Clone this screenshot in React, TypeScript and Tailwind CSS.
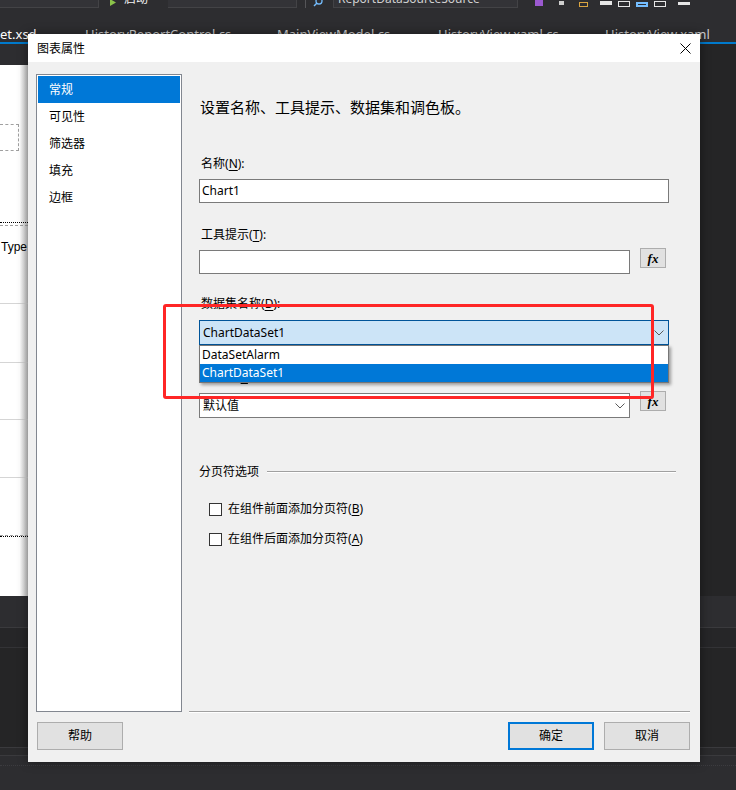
import React from "react";

function Chevron() {
  return (
    <svg width="10" height="6" viewBox="0 0 10 6" className="block">
      <path d="M0.5 0.5 L5 5 L9.5 0.5" fill="none" stroke="#5a5a5a" strokeWidth="1" />
    </svg>
  );
}

function FxButton() {
  return (
    <div className="w-[26px] h-[20px] bg-[#e1e1e1] border border-[#adadad] flex items-center justify-center">
      <span className="font-['Liberation_Serif',serif] italic font-bold text-[13px] leading-[13px] text-black">fx</span>
    </div>
  );
}

function Label({ text, k }: { text: string; k: string }) {
  return (
    <div className="text-[12px] leading-[16px] text-black pl-[2px]">
      {text}(<span className="underline underline-offset-2">{k}</span>):
    </div>
  );
}

function Checkbox({ text, k }: { text: string; k: string }) {
  return (
    <div className="flex items-center h-[16px] pl-[10px]">
      <div className="w-[13px] h-[13px] border border-[#333333] bg-white" />
      <div className="ml-[6px] text-[12px] leading-[16px] text-black">
        {text}(<span className="underline underline-offset-2">{k}</span>)
      </div>
    </div>
  );
}

function Btn({ text, primary }: { text: string; primary?: boolean }) {
  return (
    <div
      className={
        "w-[86px] h-[28px] flex items-center justify-center text-[12px] text-black bg-[#e1e1e1] " +
        (primary ? "border-2 border-[#0078d7]" : "border border-[#adadad]")
      }
    >
      {text}
    </div>
  );
}

export default function App() {
  return (
    <div className="relative w-[736px] h-[790px] overflow-hidden bg-[#2d2d30] font-['Noto_Sans','Noto_Sans_CJK_SC',sans-serif]">
      {/* IDE background */}
      <div className="flex flex-col w-full h-full">
        {/* toolbar (mostly clipped) */}
        <div className="h-[8px] flex items-end overflow-hidden">
          <div className="w-[99px] h-[20px] shrink-0 border-r border-b border-[#434346] bg-[#333337]" />
          <div className="w-[11px] shrink-0" />
          <div className="h-[20px] w-[58px] shrink-0 flex items-end pb-[2px]">
            <svg width="6" height="7" viewBox="0 0 6 7"><path d="M0 0 L6 3.5 L0 7z" fill="#8bc34a" /></svg>
            <span className="ml-[8px] text-[12px] leading-[14px] text-[#f1f1f1]">启动</span>
          </div>
          <div className="w-[129px] h-[20px] shrink-0 border-r border-b border-[#434346] bg-[#333337]" />
          <div className="w-[8px] shrink-0" />
          <div className="w-[1px] h-[20px] shrink-0 bg-[#555558]" />
          <div className="w-[7px] shrink-0" />
          <div className="w-[20px] h-[20px] shrink-0 flex items-end pb-[1px]">
            <svg width="10" height="8" viewBox="0 0 10 8"><circle cx="6" cy="2" r="3" fill="none" stroke="#75beff" strokeWidth="1.3" /><path d="M4 4 L1 7" stroke="#75beff" strokeWidth="1.5" /></svg>
          </div>
          <div className="w-[185px] h-[20px] shrink-0 border border-[#434346] bg-[#333337] px-[4px] text-[12px] leading-[19px] text-[#d0d0d0] overflow-hidden whitespace-nowrap">
            ReportDataSourceSource
          </div>
          <div className="w-[17px] shrink-0" />
          <div className="w-[8px] h-[6px] shrink-0 bg-[#9b59d0] mb-[2px]" />
          <div className="w-[16px] shrink-0" />
          <div className="w-[5px] h-[4px] shrink-0 bg-[#cfcfcf] mb-[3px]" />
          <div className="w-[15px] shrink-0" />
          <div className="w-[9px] h-[5px] shrink-0 border border-[#d9a441] mb-[1px]" />
          <div className="w-[12px] shrink-0" />
          <div className="w-[12px] h-[4px] shrink-0 bg-[#e6e6e6] mb-[3px]" />
          <div className="w-[6px] shrink-0" />
          <div className="w-[12px] h-[6px] shrink-0 border border-[#e6e6e6] mb-[1px]" />
          <div className="w-[6px] shrink-0" />
          <div className="w-[12px] h-[5px] shrink-0 border-2 border-[#75beff] mb-[1px]" />
          <div className="w-[6px] shrink-0" />
          <div className="w-[12px] h-[6px] shrink-0 border border-[#e6e6e6] mb-[1px]" />
          <div className="w-[12px] shrink-0" />
          <div className="w-[12px] h-[3px] shrink-0 bg-[#e6e6e6] mb-[3px]" />
        </div>
        {/* tab row */}
        <div className="h-[34px] flex pt-[17px] text-[13px] leading-[18px] whitespace-nowrap">
          <div className="w-[85px] shrink-0 text-[#ffffff]">et.xsd</div>
          <div className="w-[192px] shrink-0 text-[#d0d0d0]">HistoryReportControl.cs</div>
          <div className="w-[161px] shrink-0 text-[#d0d0d0]">MainViewModel.cs</div>
          <div className="w-[167px] shrink-0 text-[#d0d0d0]">HistoryView.xaml.cs</div>
          <div className="flex-1 text-[#d0d0d0]">HistoryView.xaml</div>
        </div>
        <div className="h-[2px] bg-[#007acc]" />
        {/* editor area */}
        <div className="h-[552px] flex">
          <div className="w-[28px] flex flex-col">
            <div className="h-[21px] bg-[#2d2d30]" />
            <div className="flex-1 bg-gradient-to-r from-white from-70% to-[#c8c8c8] flex flex-col overflow-hidden">
              <div className="h-[59px] shrink-0" />
              <div className="h-[27px] w-[19px] shrink-0 border border-dashed border-[#a0a0a0] border-l-0" />
              <div className="h-[71px] shrink-0" />
              <div className="h-[1px] shrink-0 border-t border-dotted border-black" />
              <div className="h-[2px] shrink-0" />
              <div className="h-[1px] shrink-0 border-t border-dashed border-[#a0a0a0]" />
              <div className="h-[13px] shrink-0" />
              <div className="text-[12px] leading-[16px] text-black pl-[1px] font-['Liberation_Sans',sans-serif]">Type</div>
              <div className="h-[48px] shrink-0" />
              <div className="h-[1px] shrink-0 bg-[#d5d5d5]" />
              <div className="h-[58px] shrink-0" />
              <div className="h-[1px] shrink-0 bg-[#d5d5d5]" />
              <div className="h-[56px] shrink-0" />
              <div className="h-[1px] shrink-0 bg-[#d5d5d5]" />
              <div className="h-[57px] shrink-0" />
              <div className="h-[1px] shrink-0 bg-[#d5d5d5]" />
              <div className="h-[57px] shrink-0" />
              <div className="h-[1px] shrink-0 border-t border-dashed border-[#a0a0a0]" />
              <div className="h-[1px] shrink-0 border-t border-dotted border-black" />
            </div>
          </div>
          <div className="flex-1" />
          <div className="w-[36px] bg-[#252526]" />
        </div>
        {/* bottom area */}
        <div className="h-[32px] bg-[#2d2d30] border-b border-[#3a3a3d]" />
        <div className="h-[20px] bg-[#262628] border-b border-[#333336]" />
        <div className="h-[99px] bg-[#252526]" />
        <div className="h-[8px] bg-[#2a2a2c] border-t border-[#3a3a3d]" />
        <div className="h-[10px] bg-[#2d2d30] border-t border-[#3a3a3d]" />
        <div className="h-[2px] border-t border-dotted border-[#3c3c40]" />
        <div className="flex-1 bg-[#2d2d30]" />
      </div>

      {/* Dialog window */}
      <div className="absolute left-[28px] top-[34px] w-[672px] h-[728px] bg-[#f0f0f0] flex flex-col shadow-[0_0_10px_rgba(0,0,0,0.45)]">
        <div className="h-[28px] bg-white flex items-center justify-between pl-[9px] pr-[9px]">
          <span className="text-[12px] leading-[16px] text-black mt-[1px]">图表属性</span>
          <svg width="11" height="11" viewBox="0 0 11 11" className="block">
            <path d="M0.5 0.5 L10.5 10.5 M10.5 0.5 L0.5 10.5" stroke="#000" strokeWidth="1" />
          </svg>
        </div>
        <div className="flex-1 flex flex-col pl-[8px] pr-[10px] pt-[12px]">
          <div className="h-[638px] flex gap-[7px]">
            {/* nav list */}
            <div className="w-[146px] border border-[#828790] bg-white p-[1px] flex flex-col">
              <div className="h-[27px] bg-[#0078d7] text-white text-[12px] leading-[27px] pl-[11px]">常规</div>
              <div className="h-[27px] text-black text-[12px] leading-[27px] pl-[11px]">可见性</div>
              <div className="h-[27px] text-black text-[12px] leading-[27px] pl-[11px]">筛选器</div>
              <div className="h-[27px] text-black text-[12px] leading-[27px] pl-[11px]">填充</div>
              <div className="h-[27px] text-black text-[12px] leading-[27px] pl-[11px]">边框</div>
            </div>
            {/* content */}
            <div className="flex-1 flex flex-col border-b border-[#a0a0a0] shadow-[0_1px_0_#ffffff] pl-[10px] pr-[21px]">
              <div className="mt-[23px] text-[15px] leading-[20px] text-black pl-[1px]">设置名称、工具提示、数据集和调色板。</div>

              <div className="mt-[39px]"><Label text="名称" k="N" /></div>
              <div className="mt-[7px] h-[24px] border border-[#7a7a7a] bg-white pl-[2px] text-[12px] leading-[22px] text-black">Chart1</div>

              <div className="mt-[24px]"><Label text="工具提示" k="T" /></div>
              <div className="mt-[5px] flex items-start">
                <div className="mt-[2px] w-[431px] h-[24px] border border-[#7a7a7a] bg-white" />
                <div className="ml-[10px]"><FxButton /></div>
              </div>

              <div className="mt-[22px]"><Label text="数据集名称" k="D" /></div>
              <div className="mt-[8px] relative">
                <div className="h-[25px] border border-[#005499] bg-[#cce4f7] flex items-center justify-between pl-[3px] pr-[4px] text-[12px] text-black">
                  <span>ChartDataSet1</span>
                  <Chevron />
                </div>
                <div className="absolute left-0 top-full w-full z-10 bg-white border border-[#767676] shadow-[2px_2px_3px_rgba(0,0,0,0.35)] text-[12px]">
                  <div className="h-[18px] leading-[18px] pl-[2px] text-black">DataSetAlarm</div>
                  <div className="h-[18px] leading-[18px] pl-[2px] bg-[#0078d7] text-white">ChartDataSet1</div>
                </div>
              </div>

              <div className="mt-[24px]"><Label text="调色板" k="P" /></div>
              <div className="mt-[6px] flex items-start">
                <div className="mt-[2px] w-[431px] h-[25px] border border-[#7a7a7a] bg-white flex items-center justify-between pl-[3px] pr-[4px] text-[12px] text-black">
                  <span>默认值</span>
                  <Chevron />
                </div>
                <div className="ml-[10px]"><FxButton /></div>
              </div>

              <div className="mt-[46px] flex items-center h-[16px]">
                <span className="text-[12px] leading-[16px] text-black">分页符选项</span>
                <div className="flex-1 ml-[8px] -mr-[7px] border-t border-[#a0a0a0] border-b border-b-white" />
              </div>

              <div className="mt-[21px]"><Checkbox text="在组件前面添加分页符" k="B" /></div>
              <div className="mt-[14px]"><Checkbox text="在组件后面添加分页符" k="A" /></div>
            </div>
          </div>
          {/* buttons */}
          <div className="mt-[10px] flex items-center pl-[1px]">
            <Btn text="帮助" />
            <div className="flex-1" />
            <Btn text="确定" primary />
            <div className="w-[10px]" />
            <Btn text="取消" />
          </div>
        </div>
      </div>

      {/* red annotation rectangle */}
      <div className="absolute left-[163px] top-[304px] w-[491px] h-[95px] border-[3px] border-[#ff2626] rounded-[3px] z-20" />
    </div>
  );
}
